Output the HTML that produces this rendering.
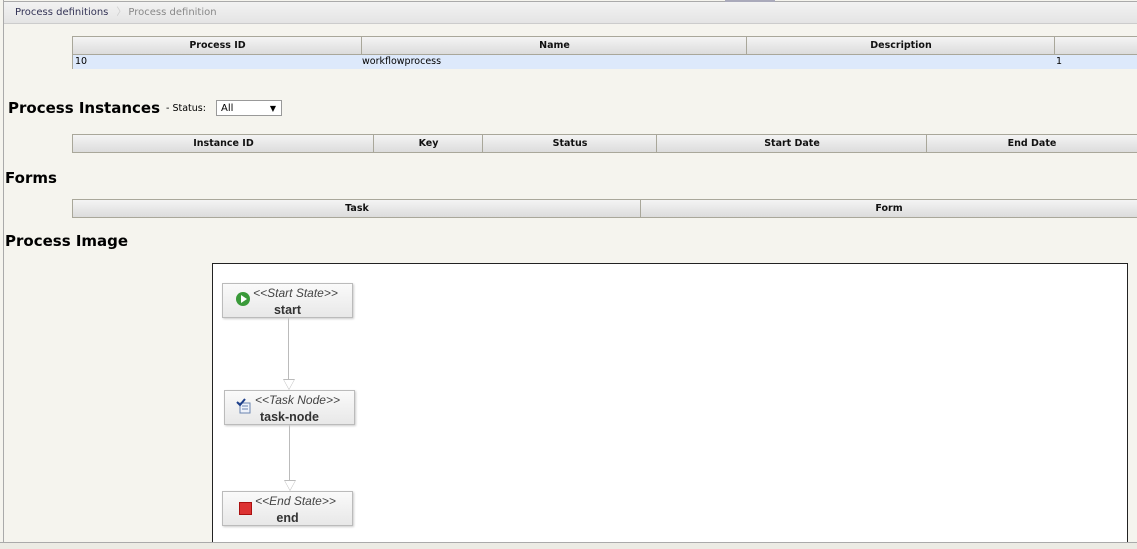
<!DOCTYPE html><html><head><style>
html,body{margin:0;width:1137px;height:549px;overflow:hidden}
body{background:#f5f4ee;font-family:"DejaVu Sans","Liberation Sans",sans-serif;position:relative}
.a{position:absolute}
.bc{left:4px;top:1px;width:1133px;height:21px;background:linear-gradient(#f2f2f2,#e4e4e4);border-top:1px solid #aaa;border-bottom:1px solid #ccc;font-size:10px;line-height:21px}
.lb{left:3px;top:0;width:1px;height:542px;background:#aaa}
.th{height:19px;background:linear-gradient(#f4f4f4,#dcdcdc);border:1px solid #a9a79a;border-right:none;box-sizing:border-box;font-size:9.5px;font-weight:bold;text-align:center;line-height:18px;color:#111}
.h{font-weight:bold;font-size:15px;color:#000}
.n{background:linear-gradient(#fafafa,#e8e8e8);border:1px solid #bbb;box-shadow:1px 1px 2px #ccc;box-sizing:border-box;width:131px;height:35px;font-family:"Liberation Sans",sans-serif;text-align:center}
.n i{display:block;font-size:12px;color:#444;margin-top:2px;padding-left:16px;line-height:14px}
.n b{display:block;font-size:12.5px;color:#333;margin-top:3px;line-height:14px}
.ln{width:1px;background:#bbb}
.tr{width:0;height:0;border-left:6px solid transparent;border-right:6px solid transparent;border-top:11px solid #bbb}
.tr:after{content:"";position:absolute;left:-5px;top:-10px;border-left:5px solid transparent;border-right:5px solid transparent;border-top:9px solid #fff}
</style></head><body>
<div class="a lb"></div>
<div class="a bc"><span style="margin-left:11px;color:#335">Process definitions</span><span style="color:#ccc;margin-left:8px">〉</span><span style="color:#888;margin-left:2px">Process definition</span></div>
<div class="a" style="left:725px;top:0;width:50px;height:2px;background:#aab"></div>
<div class="a th" style="left:72px;top:36px;width:290px">Process ID</div>
<div class="a th" style="left:361px;top:36px;width:386px">Name</div>
<div class="a th" style="left:746px;top:36px;width:309px">Description</div>
<div class="a th" style="left:1054px;top:36px;width:83px"></div>
<div class="a" style="left:72px;top:55px;width:1065px;height:14px;background:#dde9fb;font-size:9.5px;line-height:14px;border-left:1px solid #a9a79a"><span class="a" style="left:2px">10</span><span class="a" style="left:289px">workflowprocess</span><span class="a" style="left:983px">1</span></div>
<div class="a h" style="left:8px;top:99px;font-size:15px">Process Instances</div>
<div class="a" style="left:166px;top:103px;font-size:9.5px">- Status:</div>
<div class="a" style="left:216px;top:100px;width:64px;height:14px;border:1px solid #999;background:#fff;font-size:10px;line-height:15px"><span style="margin-left:4px">All</span><span style="position:absolute;right:5px;font-size:8px">▼</span></div>
<div class="a th" style="left:72px;top:134px;width:302px">Instance ID</div>
<div class="a th" style="left:373px;top:134px;width:110px">Key</div>
<div class="a th" style="left:482px;top:134px;width:175px">Status</div>
<div class="a th" style="left:656px;top:134px;width:271px">Start Date</div>
<div class="a th" style="left:926px;top:134px;width:211px">End Date</div>
<div class="a h" style="left:5px;top:169px">Forms</div>
<div class="a th" style="left:72px;top:199px;width:569px">Task</div>
<div class="a th" style="left:640px;top:199px;width:497px">Form</div>
<div class="a h" style="left:5px;top:232px">Process Image</div>
<div class="a" style="left:212px;top:263px;width:914px;height:290px;border:1px solid #222;background:#fff"></div>
<div class="a ln" style="left:288px;top:318px;height:62px"></div>
<div class="a tr" style="left:283px;top:379px"></div>
<div class="a ln" style="left:289px;top:425px;height:56px"></div>
<div class="a tr" style="left:284px;top:480px"></div>
<div class="a n" style="left:222px;top:283px"><i>&lt;&lt;Start State&gt;&gt;</i><b>start</b></div>
<div class="a" style="left:236px;top:292px;width:14px;height:14px;border-radius:50%;background:#3a9a3a"><div class="a" style="left:5px;top:3px;border-left:6px solid #fff;border-top:4px solid transparent;border-bottom:4px solid transparent"></div></div>
<div class="a n" style="left:224px;top:390px"><i>&lt;&lt;Task Node&gt;&gt;</i><b>task-node</b></div>
<svg class="a" style="left:236px;top:398px" width="16" height="16"><rect x="4" y="5" width="10" height="10" fill="#eef2fa" stroke="#6a84b0"/><line x1="6" y1="8" x2="12" y2="8" stroke="#6a84b0"/><line x1="6" y1="11" x2="12" y2="11" stroke="#6a84b0"/><path d="M1 4 L4 7 L9 1" stroke="#1d3f8a" stroke-width="2" fill="none"/></svg>
<div class="a n" style="left:222px;top:491px"><i>&lt;&lt;End State&gt;&gt;</i><b>end</b></div>
<div class="a" style="left:239px;top:502px;width:11px;height:11px;background:#d33;border:1px solid #a11"></div>
<div class="a" style="left:0;top:542px;width:1137px;height:7px;background:#ecebe4;border-top:1px solid #aaa"></div>
</body></html>
